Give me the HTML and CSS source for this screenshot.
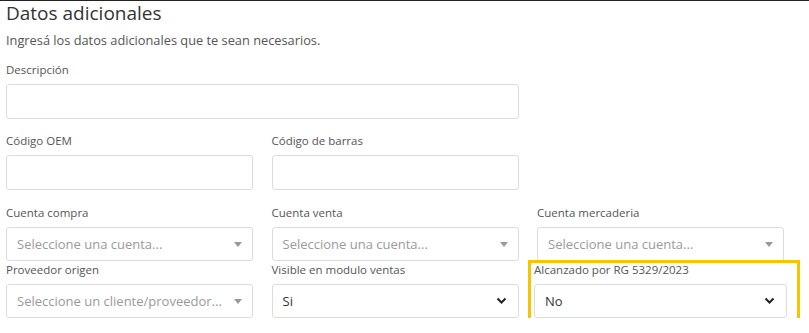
FILE: index.html
```html
<!DOCTYPE html>
<html lang="es">
<head>
    <meta charset="UTF-8">
    <meta name="viewport" content="width=device-width, initial-scale=1.0">
    <title>Datos adicionales</title>
    <link rel="stylesheet" href="styles.css">
</head>
<body>
    <div class="top-line"></div>
    <div id="container">
        <h2 class="title">Datos adicionales</h2>
        <p class="subtitle">Ingresá los datos adicionales que te sean necesarios.</p>

        <div class="row row-desc">
            <div class="field span-2">
                <label>Descripción</label>
                <div class="input"></div>
            </div>
        </div>

        <div class="row row-codes">
            <div class="field">
                <label>Código OEM</label>
                <div class="input"></div>
            </div>
            <div class="field">
                <label>Código de barras</label>
                <div class="input"></div>
            </div>
        </div>

        <div class="row row-accounts">
            <div class="field">
                <label>Cuenta compra</label>
                <div class="input select">
                    <span class="placeholder">Seleccione una cuenta...</span>
                    <svg class="caret" width="8" height="5" viewBox="0 0 8 5"><path d="M0 0h8L4 5z"/></svg>
                </div>
            </div>
            <div class="field">
                <label>Cuenta venta</label>
                <div class="input select">
                    <span class="placeholder">Seleccione una cuenta...</span>
                    <svg class="caret" width="8" height="5" viewBox="0 0 8 5"><path d="M0 0h8L4 5z"/></svg>
                </div>
            </div>
            <div class="field">
                <label>Cuenta mercaderia</label>
                <div class="input select">
                    <span class="placeholder">Seleccione una cuenta...</span>
                    <svg class="caret" width="8" height="5" viewBox="0 0 8 5"><path d="M0 0h8L4 5z"/></svg>
                </div>
            </div>
        </div>

        <div class="row row-extra">
            <div class="field">
                <label>Proveedor origen</label>
                <div class="input select">
                    <span class="placeholder">Seleccione un cliente/proveedor...</span>
                    <svg class="caret" width="8" height="5" viewBox="0 0 8 5"><path d="M0 0h8L4 5z"/></svg>
                </div>
            </div>
            <div class="field">
                <label>Visible en modulo ventas</label>
                <div class="input select">
                    <span class="value">Si</span>
                    <svg class="chevron" width="11" height="8" viewBox="0 0 11 8"><path d="M1.5 1.5l4 4 4-4"/></svg>
                </div>
            </div>
            <div class="highlight">
                <div class="field">
                    <label>Alcanzado por RG 5329/2023</label>
                    <div class="input select">
                        <span class="value">No</span>
                        <svg class="chevron" width="11" height="8" viewBox="0 0 11 8"><path d="M1.5 1.5l4 4 4-4"/></svg>
                    </div>
                </div>
            </div>
        </div>
    </div>
</body>
</html>
```

FILE: styles.css
```css
body{
    margin: 0;
    font-family: 'Open Sans', 'Noto Sans', sans-serif;
    background-color: white;
    color: #333;
}
.top-line{
    height: 1px;
    background-color: #222;
}
#container{
    padding: 0 6px;
    width: 778px;
}
.title{
    font-size: 19px;
    font-weight: 400;
    line-height: 22px;
    margin: 1px 0 0 0;
    color: #333;
}
.subtitle{
    font-size: 12.8px;
    line-height: 16px;
    margin: 8px 0 0 0;
    color: #555;
}
.row{
    display: grid;
    grid-template-columns: 247px 247px 247px;
    column-gap: 18.5px;
}
.row-desc{ margin-top: 14px; }
.row-codes{ margin-top: 14px; }
.row-accounts{ margin-top: 15px; }
.row-extra{ margin-top: 1px; }
.row-accounts .input,
.row-extra .input{
    height: 34px;
}
.span-2{
    grid-column: span 2;
}
.field{
    display: flex;
    flex-direction: column;
    gap: 6px;
}
.field label{
    font-size: 11.5px;
    line-height: 16px;
    color: #555;
}
.input{
    height: 35px;
    box-sizing: border-box;
    border: 1px solid #dcdcdc;
    border-radius: 3px;
    background-color: white;
}
.select{
    display: flex;
    align-items: center;
    justify-content: space-between;
    padding: 0 10px 0 10px;
}
.placeholder{
    color: #9a9a9a;
    font-size: 13px;
}
.value{
    color: #333;
    font-size: 13px;
}
.caret{
    fill: #999;
}
.chevron{
    fill: none;
    stroke: #222;
    stroke-width: 2;
    margin-right: 1px;
}
/* yellow box around the last field */
.highlight{
    border: 3px solid #f7c500;
    margin: -2px -16px -9px -9px;
    padding: 0 10px 3px 3px;
}
.highlight .field{
    margin-top: -1px;
}
```
